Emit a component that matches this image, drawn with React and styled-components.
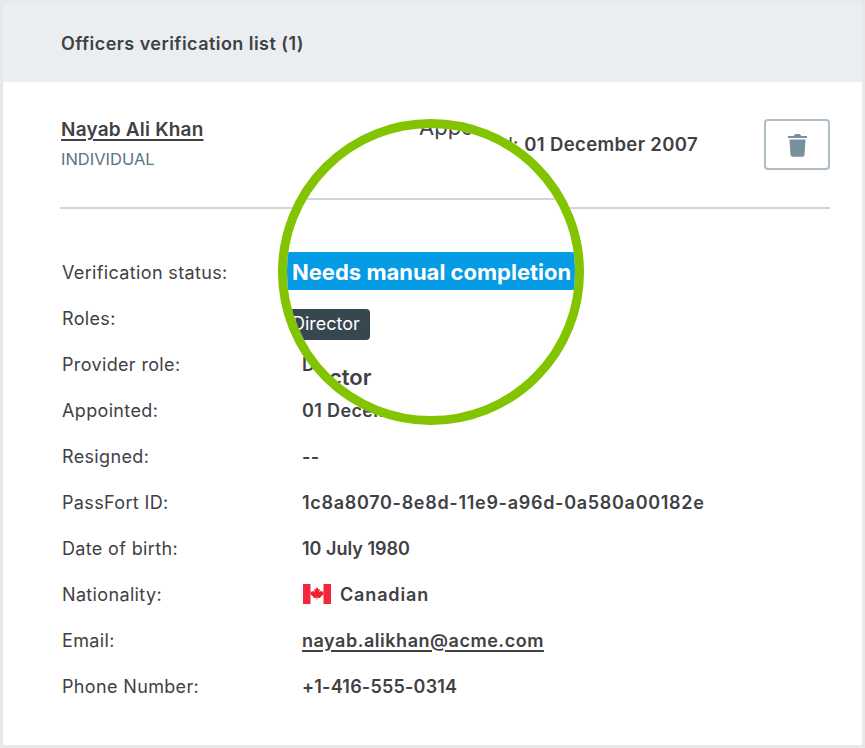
import React from "react";
import styled, { createGlobalStyle } from "styled-components";

const Global = createGlobalStyle`
  html, body { margin: 0; padding: 0; background: #e6e8ea; }
  body { font-family: "Inter", "Open Sans", sans-serif; color: #3f4144; }
`;
const Page = styled.div`
  position: relative;
  box-sizing: border-box;
  width: 865px;
  height: 748px;
  padding: 3px;
  overflow: hidden;
`;
const Card = styled.div`
  height: 100%;
  background: #fff;
`;
const TitleBar = styled.div`
  height: 79px;
  background: #ebeef1;
  display: flex;
  align-items: center;
  padding: 2px 0 0 58px;
  box-sizing: border-box;
  font-size: 18px;
  letter-spacing: 0.45px;
  font-weight: 600;
`;
const Body = styled.div`
  padding: 0 32px 0 57px;
`;
const Head = styled.div`
  height: 127px;
  box-sizing: border-box;
  border-bottom: 2px solid #cdd6db;
  display: flex;
  align-items: flex-start;
  padding-top: 36px;
`;
const Who = styled.div`
  width: 359px;
  padding-left: 1px;
`;
const Name = styled.a`
  display: block;
  font-size: 19px;
  letter-spacing: 0.2px;
  font-weight: 600;
  line-height: 24px;
  text-decoration: underline;
  text-decoration-thickness: 2px;
  text-underline-offset: 3px;
`;
const Kind = styled.div`
  font-size: 16.5px;
  line-height: 20px;
  margin-top: 7px;
  color: #5a7484;
`;
const Appointed = styled.div`
  flex: 1;
  font-size: 18.5px;
  letter-spacing: 0.35px;
  padding-top: 14px;
  line-height: 24px;
  white-space: nowrap;
  b { font-weight: 600; }
`;
const TrashButton = styled.button`
  width: 66px;
  height: 51px;
  margin-top: 1px;
  flex: none;
  box-sizing: border-box;
  border: 2px solid #aebdc6;
  border-radius: 4px;
  background: #fff;
  display: flex;
  align-items: center;
  justify-content: center;
  padding: 0;
`;
const Rows = styled.dl`
  margin: 0;
  padding-top: 40px;
  display: grid;
  grid-template-columns: 242px 1fr;
  grid-auto-rows: 46px;
  align-items: center;
  font-size: 18px;
  letter-spacing: 0.35px;
`;
const Label = styled.dt`
  padding-left: 2px;
  box-sizing: border-box;
`;
const Value = styled.dd`
  margin: 0;
  font-weight: 600;
  display: flex;
  align-items: center;
  gap: 9px;
  letter-spacing: ${(p) => p.$track ?? 0.35}px;
`;
const Mail = styled.a`
  text-decoration: underline;
  text-decoration-thickness: 2px;
  text-underline-offset: 3px;
`;
const FlagBox = styled.svg`
  margin-left: 1px;
  flex: none;
`;
const Lens = styled.div`
  position: absolute;
  left: 278px;
  top: 119px;
  width: 306px;
  height: 306px;
  box-sizing: border-box;
  border: 9px solid #82c400;
  border-radius: 50%;
  background: #fff;
  overflow: hidden;
  display: flex;
  flex-direction: column;
  align-items: flex-start;
`;
const LensAppointed = styled.div`
  margin: -16px 0 0 132px;
  font-size: 22px;
  line-height: 30px;
  white-space: nowrap;
`;
const LensRule = styled.div`
  align-self: stretch;
  height: 2px;
  margin-top: 56px;
  background: #cdd6db;
`;
const Pill = styled.div`
  margin: 52px 0 0 -9px;
  width: 298px;
  height: 38px;
  box-sizing: border-box;
  padding-left: 14px;
  background: #069be5;
  border-radius: 2px;
  color: #fff;
  font-size: 22px;
  font-weight: 700;
  line-height: 40px;
  white-space: nowrap;
`;
const Tag = styled.div`
  margin: 19px 0 0 -3px;
  height: 31px;
  width: 86px;
  box-sizing: border-box;
  padding-left: 8px;
  border-radius: 4px;
  background: #37474f;
  color: #fff;
  font-size: 18px;
  line-height: 30px;
`;
const LensRole = styled.div`
  margin: 22px 0 0 -1px;
  font-size: 22px;
  font-weight: 600;
  line-height: 30px;
`;

const Trash = () => (
  <svg width="19" height="24" viewBox="0 0 19 24">
    <path fill="#78909c" d="M1.5 6.5h16l-1 15.6a1.9 1.9 0 0 1-1.9 1.7H4.4a1.9 1.9 0 0 1-1.9-1.7zM0 3h5.8l.9-1.6A1 1 0 0 1 7.6 1h3.8a1 1 0 0 1 .9.4L13.2 3H19v2H0z" />
  </svg>
);

const Flag = () => (
  <FlagBox width="28" height="20" viewBox="0 0 28 20">
    <rect width="28" height="20" fill="#fff" />
    <rect width="7.5" height="20" fill="#f4263a" />
    <rect x="20.5" width="7.5" height="20" fill="#f4263a" />
    <path fill="#f0202e" d="M14 3l1.4 2.6 1.4-.7-.5 3.4 1.9-1.9.5 1.3 2-.3-.6 2.1.8.6-3.4 2.9-.2 1.1-3-.4v2.5h-.6v-2.5l-3 .4-.2-1.1-3.4-2.9.8-.6-.6-2.1 2 .3.5-1.3 1.9 1.9-.5-3.4 1.4.7z" />
  </FlagBox>
);

const rows = [
  { label: "Verification status:", value: "Needs manual completion" },
  { label: "Roles:", value: "Director" },
  { label: "Provider role:", value: "Director" },
  { label: "Appointed:", value: "01 December 2007" },
  { label: "Resigned:", value: "--" },
  { label: "PassFort ID:", value: "1c8a8070-8e8d-11e9-a96d-0a580a00182e", track: 0.7 },
  { label: "Date of birth:", value: "10 July 1980", track: 0 },
  { label: "Nationality:", value: <><Flag />Canadian</>, track: 0.85 },
  { label: "Email:", value: <Mail>nayab.alikhan@acme.com</Mail>, track: 0.53 },
  { label: "Phone Number:", value: "+1-416-555-0314", track: 0.2 },
];

export default function App() {
  return (
    <Page>
      <Global />
      <Card>
        <TitleBar>Officers verification list (1)</TitleBar>
        <Body>
          <Head>
            <Who>
              <Name>Nayab Ali Khan</Name>
              <Kind>INDIVIDUAL</Kind>
            </Who>
            <Appointed>Appointed: <b>01 December 2007</b></Appointed>
            <TrashButton aria-label="Delete"><Trash /></TrashButton>
          </Head>
          <Rows>
            {rows.map(({ label, value, track }) => (
              <React.Fragment key={label}>
                <Label>{label}</Label>
                <Value $track={track}>{value}</Value>
              </React.Fragment>
            ))}
          </Rows>
        </Body>
      </Card>
      <Lens>
        <LensAppointed>Appointed:</LensAppointed>
        <LensRule />
        <Pill>Needs manual completion</Pill>
        <Tag>Director</Tag>
        <LensRole>Director</LensRole>
      </Lens>
    </Page>
  );
}
